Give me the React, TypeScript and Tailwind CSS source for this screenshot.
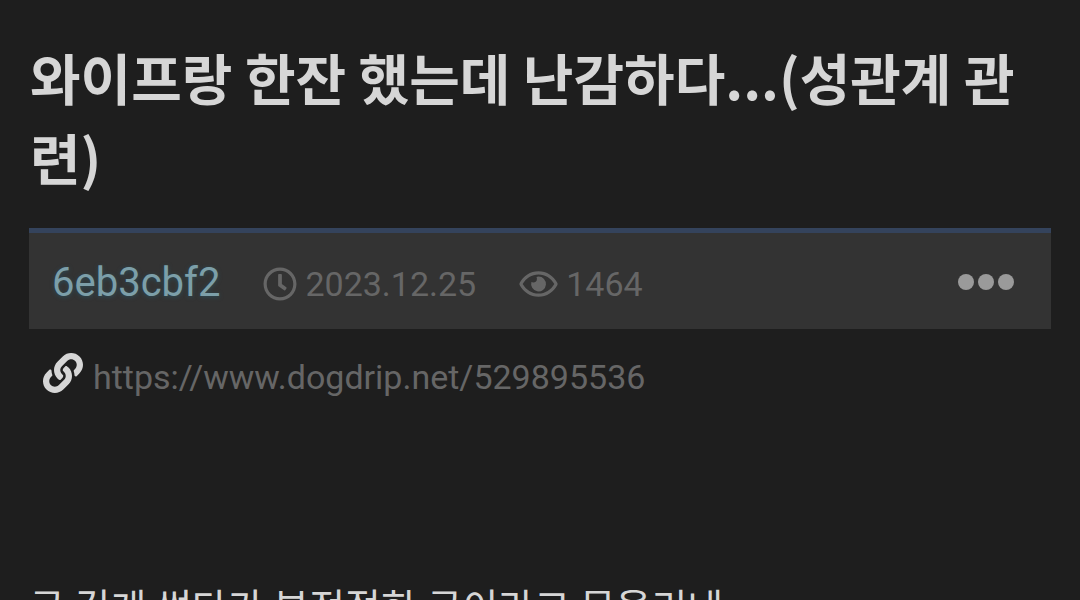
import { FaLink, FaRegClock, FaRegEye } from "react-icons/fa";

const post = {
  title: "와이프랑 한잔 했는데 난감하다...(성관계 관련)",
  author: "6eb3cbf2",
  date: "2023.12.25",
  views: 1464,
  url: "https://www.dogdrip.net/529895536",
  body: "글 길게 썼다가 부적절한 글이라고 못올리네",
};

export default function App() {
  return (
    <main className="h-screen overflow-hidden bg-[#1e1e1e] px-[29px] pt-9 font-['Roboto','Noto_Sans_CJK_KR',sans-serif] text-[#d6d6d6]">
      <article>
        <h1 className="pl-px font-['Noto_Sans_CJK_KR',sans-serif] text-[55px] leading-[80px] font-bold">
          {post.title}
        </h1>
        <PostMeta />
        <PostLink />
        <p className="mt-[172px] text-[39px] leading-[60px]">{post.body}</p>
      </article>
    </main>
  );
}

function PostMeta() {
  return (
    <div className="mt-8 flex items-center justify-between border-t-5 border-[#34435c] bg-[#333333] px-[23px] pt-5 pb-[15px]">
      <div className="flex items-baseline gap-[43px] text-[34px] leading-[60px] text-[#666666]">
        <a
          href="#author"
          className="text-[40px] text-[#7c9fa9] [text-shadow:0_1px_4px_#2b4d59]"
        >
          {post.author}
        </a>
        <span className="flex items-baseline gap-2">
          <FaRegClock className="size-[34px] self-center" />
          <time dateTime="2023-12-25">{post.date}</time>
        </span>
        <span className="flex items-baseline gap-2">
          <FaRegEye className="h-[34px] w-[39px] self-center" />
          <span>{post.views}</span>
        </span>
      </div>
      <button
        type="button"
        aria-label="More"
        className="mr-3.5 flex gap-1 pb-1 text-[#9a9a9a]"
      >
        <Dot />
        <Dot />
        <Dot />
      </button>
    </div>
  );
}

function Dot() {
  return <span className="size-4 rounded-full bg-current" />;
}

function PostLink() {
  return (
    <div className="mt-[18px] flex items-center gap-2.5 px-3.5 text-[34px] leading-[60px]">
      <FaLink className="mb-2 size-10" />
      <a href={post.url} className="text-[#666666]">
        {post.url}
      </a>
    </div>
  );
}
